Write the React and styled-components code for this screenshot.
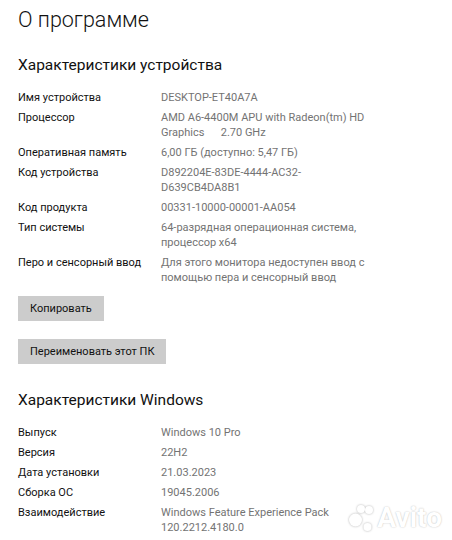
import React from "react";
import styled, { createGlobalStyle } from "styled-components";

const GlobalStyle = createGlobalStyle`
  body {
    margin: 0;
    background: #ffffff;
    font-family: Roboto, "Noto Sans", sans-serif;
  }
`;

const deviceSpecs = [
  { label: "Имя устройства", value: ["DESKTOP-ET40A7A"] },
  {
    label: "Процессор",
    value: ["AMD A6-4400M APU with Radeon(tm) HD", "Graphics\u00a0\u00a0\u00a0\u00a0\u00a0 2.70 GHz"],
  },
  { label: "Оперативная память", value: ["6,00 ГБ (доступно: 5,47 ГБ)"] },
  { label: "Код устройства", value: ["D892204E-83DE-4444-AC32-", "D639CB4DA8B1"] },
  { label: "Код продукта", value: ["00331-10000-00001-AA054"] },
  { label: "Тип системы", value: ["64-разрядная операционная система,", "процессор x64"] },
  {
    label: "Перо и сенсорный ввод",
    value: ["Для этого монитора недоступен ввод с", "помощью пера и сенсорный ввод"],
  },
];

const windowsSpecs = [
  { label: "Выпуск", value: ["Windows 10 Pro"] },
  { label: "Версия", value: ["22H2"] },
  { label: "Дата установки", value: ["21.03.2023"] },
  { label: "Сборка ОС", value: ["19045.2006"] },
  { label: "Взаимодействие", value: ["Windows Feature Experience Pack", "120.2212.4180.0"] },
];

export default function App() {
  return (
    <Page>
      <GlobalStyle />
      <Title>О программе</Title>

      <SectionTitle $top={20}>Характеристики устройства</SectionTitle>
      <SpecList specs={deviceSpecs} />
      <ActionButton $top={11}>Копировать</ActionButton>
      <ActionButton $top={18}>Переименовать этот ПК</ActionButton>

      <SectionTitle $top={25}>Характеристики Windows</SectionTitle>
      <SpecList specs={windowsSpecs} />

      <Watermark>
        <svg width="28" height="30" viewBox="0 0 28 30">
          <circle cx="7.5" cy="17" r="6.5" />
          <circle cx="13" cy="6" r="4" />
          <circle cx="21" cy="7" r="4" />
          <circle cx="19.5" cy="24" r="4" />
        </svg>
        <span>Avito</span>
      </Watermark>
    </Page>
  );
}

function SpecList({ specs }) {
  return (
    <Specs>
      {specs.map(({ label, value }) => (
        <React.Fragment key={label}>
          <Label>{label}</Label>
          <Value>
            {value.map((line) => (
              <div key={line}>{line}</div>
            ))}
          </Value>
        </React.Fragment>
      ))}
    </Specs>
  );
}

const Page = styled.div`
  position: relative;
  width: 452px;
  height: 540px;
  overflow: hidden;
  padding: 6px 0 0 18px;
  box-sizing: border-box;
`;

const Title = styled.h1`
  margin: 0;
  font-size: 21.5px;
  line-height: 28px;
  font-weight: 300;
  color: #111;
`;

const SectionTitle = styled.h2`
  margin: ${(props) => props.$top}px 0 0;
  font-size: 15.5px;
  line-height: 22px;
  font-weight: 400;
  color: #111;
`;

const Specs = styled.div`
  display: grid;
  grid-template-columns: 143px 1fr;
  row-gap: 5px;
  margin-top: 14px;
  font-size: 11px;
  line-height: 15px;
`;

const Label = styled.div`
  color: #111;
`;

const Value = styled.div`
  color: #737373;
  white-space: nowrap;
`;

const ActionButton = styled.button`
  display: block;
  margin-top: ${(props) => props.$top}px;
  height: 25px;
  padding: 0 12px;
  border: none;
  background: #cccccc;
  color: #111;
  font-family: Roboto, "Noto Sans", sans-serif;
  font-size: 11px;
`;

const Watermark = styled.div`
  position: absolute;
  right: 10px;
  bottom: 7px;
  display: flex;
  align-items: center;
  gap: 1px;
  svg {
    fill: #ffffff;
    filter: drop-shadow(0 0 1.2px rgba(0, 0, 0, 0.3));
  }
  span {
    font-family: Roboto, sans-serif;
    font-weight: 700;
    font-size: 28px;
    line-height: 30px;
    color: #ffffff;
    text-shadow: 0 0 1.5px rgba(0, 0, 0, 0.3);
  }
`;
